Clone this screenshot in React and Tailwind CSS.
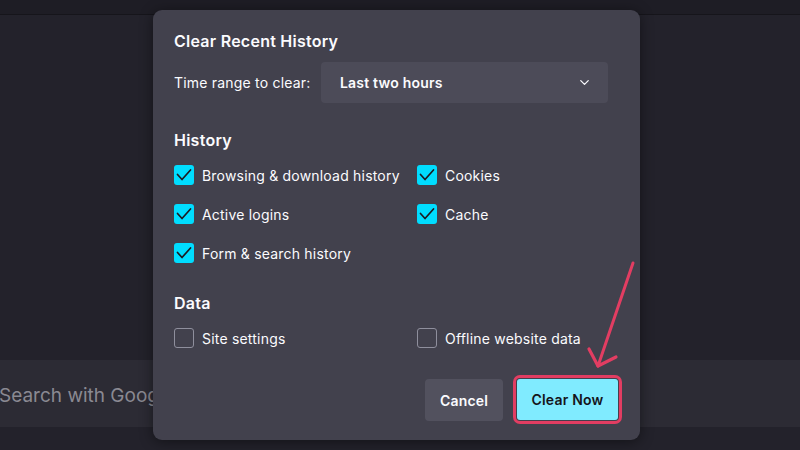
import React, { useState } from 'react';
import { ChevronDown } from 'lucide-react';

function Check({ checked }) {
    return (
        <span
            className={`flex items-center justify-center w-[20px] h-[20px] rounded-[3px] shrink-0 ${
                checked ? 'bg-[#00ddff]' : 'border border-[#8f8f9d] bg-transparent'
            }`}
        >
            {checked && (
                <svg width="18" height="18" viewBox="0 0 18 18" fill="none">
                    <path d="M2.5 8.5 L7 13.5 L15.5 4" stroke="#1c1b22" strokeWidth="1.7" strokeLinecap="round" strokeLinejoin="round" />
                </svg>
            )}
        </span>
    );
}

function Option({ label, checked }) {
    return (
        <label className="flex items-center gap-[8px] h-[20px] text-[14px] tracking-[0.2px] text-[#fbfbfe]">
            <Check checked={checked} />
            <span>{label}</span>
        </label>
    );
}

export default function App() {
    const [range] = useState('Last two hours');

    const history = [
        { label: 'Browsing & download history', checked: true },
        { label: 'Cookies', checked: true },
        { label: 'Active logins', checked: true },
        { label: 'Cache', checked: true },
        { label: 'Form & search history', checked: true },
    ];

    return (
        <div
            className="relative w-[800px] h-[450px] overflow-hidden bg-[#23222b]"
            style={{ fontFamily: 'Inter, "Noto Sans", sans-serif' }}
        >
            {/* Browser behind the dialog */}
            <div className="h-[15px] bg-[#1e1d25] border-b border-[#16151b]" />
            <div className="h-[345px]" />
            <div className="h-[67px] bg-[#2c2b34] flex items-center pt-[5px]">
                <span className="ml-[-1px] text-[19px] text-[#8a8992]">Search with Google or enter address</span>
            </div>

            {/* Dialog */}
            <div className="absolute left-[153px] top-[10px] w-[487px] h-[430px] rounded-[9px] bg-[#42414d] shadow-[0_2px_14px_rgba(0,0,0,0.45)] pl-[21px] pt-[21px] text-[#fbfbfe]">
                <h1 className="text-[16px] leading-[20px] font-semibold tracking-[0.25px]">Clear Recent History</h1>

                <div className="flex items-center mt-[11px] h-[41px]">
                    <span className="text-[14px] tracking-[0.2px] w-[147px]">Time range to clear:</span>
                    <div className="flex items-center justify-between w-[287px] h-[41px] rounded-[4px] bg-[#4c4b58] pl-[19px] pr-[16px]">
                        <span className="text-[14px] font-semibold tracking-[0.2px]">{range}</span>
                        <ChevronDown size={15} strokeWidth={2} className="text-[#fbfbfe]" />
                    </div>
                </div>

                <h2 className="mt-[27px] text-[16px] leading-[20px] font-semibold tracking-[0.25px]">History</h2>
                <div className="grid grid-cols-[243px_1fr] gap-y-[19px] mt-[15px]">
                    {history.map((item) => (
                        <Option key={item.label} label={item.label} checked={item.checked} />
                    ))}
                </div>

                <h2 className="mt-[30px] text-[16px] leading-[20px] font-semibold tracking-[0.25px]">Data</h2>
                <div className="grid grid-cols-[243px_1fr] mt-[15px]">
                    <Option label="Site settings" checked={false} />
                    <Option label="Offline website data" checked={false} />
                </div>

                <div className="flex justify-end gap-[14px] mt-[31px] pr-[22px]">
                    <button className="w-[78px] h-[42px] rounded-[4px] bg-[#52515e] text-[14px] font-semibold tracking-[0.2px] text-[#fbfbfe]">
                        Cancel
                    </button>
                    <button className="w-[101px] h-[41px] rounded-[3px] bg-[#80ebff] text-[14px] font-semibold tracking-[0.2px] text-[#15141a] outline-[3px] outline-solid outline-[#e23d62] outline-offset-[1px]">
                        Clear Now
                    </button>
                </div>
            </div>

            {/* Annotation arrow */}
            <svg className="absolute left-0 top-0 pointer-events-none" width="800" height="450">
                <path d="M633 263 L598 366" stroke="#e23d62" strokeWidth="3" strokeLinecap="round" fill="none" />
                <path d="M589 349 L598 366 L616 357" stroke="#e23d62" strokeWidth="3.2" strokeLinecap="round" strokeLinejoin="round" fill="none" />
            </svg>
        </div>
    );
}
